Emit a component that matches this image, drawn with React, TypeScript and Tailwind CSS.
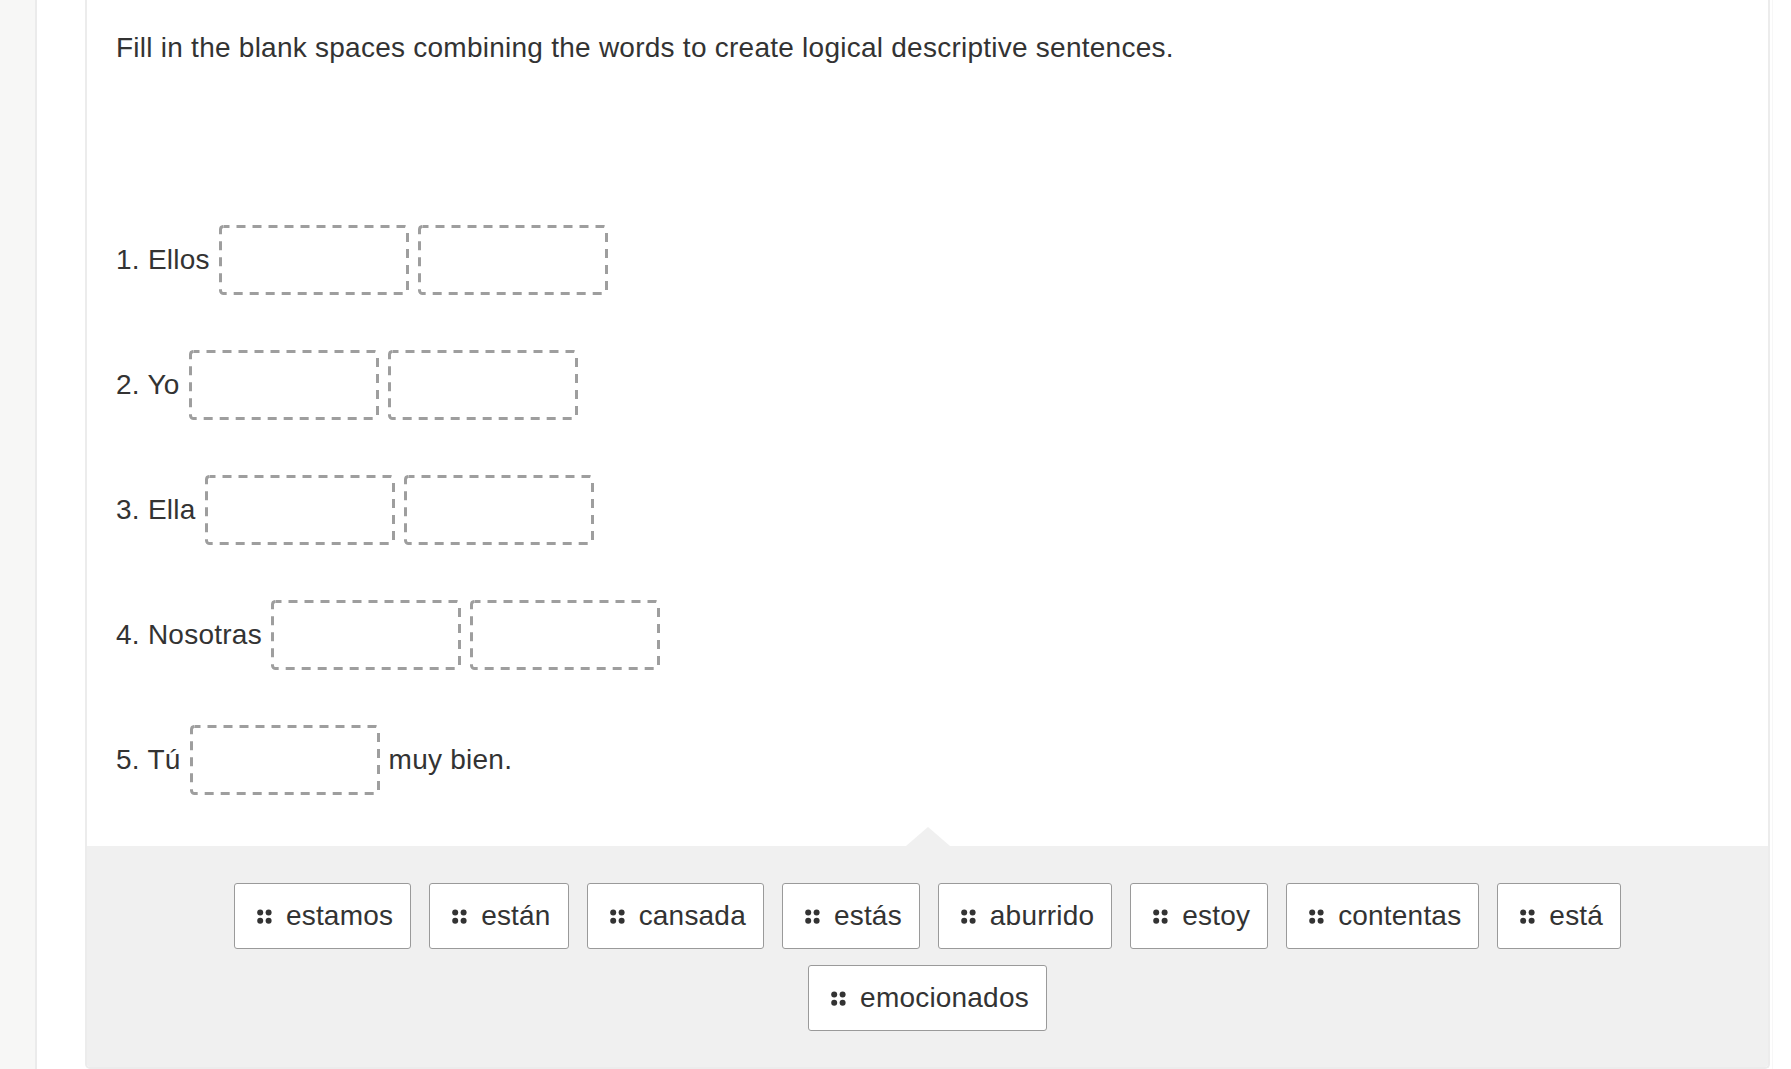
import React from "react";

function Blank() {
  return (
    <div className="relative w-[190px] h-[70px] shrink-0">
      <svg className="absolute inset-0" width="190" height="70" viewBox="0 0 190 70">
        <rect
          x="1.5"
          y="1.5"
          width="187"
          height="67"
          rx="3"
          fill="none"
          stroke="#9e9e9e"
          strokeWidth="3"
          strokeDasharray="9 7"
          strokeDashoffset="3"
        />
      </svg>
    </div>
  );
}

function Dots() {
  return (
    <svg width="15" height="15" viewBox="0 0 15 15" className="shrink-0">
      <circle cx="3.2" cy="3.4" r="3" fill="#333" />
      <circle cx="11.6" cy="3.4" r="3" fill="#333" />
      <circle cx="3.2" cy="11.8" r="3" fill="#333" />
      <circle cx="11.6" cy="11.8" r="3" fill="#333" />
    </svg>
  );
}

function Chip({ word }: { word: string }) {
  return (
    <div className="h-[66px] flex items-center bg-white border border-[#9a9a9a] rounded-[3px] pl-[22px] pr-[17px]">
      <Dots />
      <span className="ml-[14px] text-[28px] leading-[32px] tracking-[0.2px]">{word}</span>
    </div>
  );
}

const rows: { label: string; blanks: number; after?: string }[] = [
  { label: "1. Ellos", blanks: 2 },
  { label: "2. Yo", blanks: 2 },
  { label: "3. Ella", blanks: 2 },
  { label: "4. Nosotras", blanks: 2 },
  { label: "5. Tú", blanks: 1, after: "muy bien." },
];

const words = [
  "estamos",
  "están",
  "cansada",
  "estás",
  "aburrido",
  "estoy",
  "contentas",
  "está",
  "emocionados",
];

export default function App() {
  return (
    <div className="flex h-[1069px] w-[1791px] overflow-hidden bg-white text-[#333] font-['Liberation_Sans',Arial,sans-serif]">
      <div className="w-[37px] shrink-0 bg-[#f7f7f6] border-r-2 border-[#ebebeb]" />
      <div className="w-[48px] shrink-0 bg-white" />
      <div className="w-[1685px] shrink-0 flex flex-col bg-white border-x-2 border-b-2 border-[#ececec] rounded-b-[5px] overflow-hidden">
        <div className="flex-1 pl-[29px] pt-[32px]">
          <p className="text-[28px] leading-[32px] tracking-[0.25px]">
            Fill in the blank spaces combining the words to create logical descriptive sentences.
          </p>
          <div className="mt-[161px] flex flex-col gap-[55px]">
            {rows.map((r) => (
              <div key={r.label} className="flex items-center h-[70px] gap-[9px]">
                <span className="text-[28px] leading-[32px] tracking-[0.25px] whitespace-nowrap">{r.label}</span>
                {Array.from({ length: r.blanks }).map((_, i) => (
                  <Blank key={i} />
                ))}
                {r.after && (
                  <span className="text-[28px] leading-[32px] tracking-[0.25px] whitespace-nowrap">{r.after}</span>
                )}
              </div>
            ))}
          </div>
        </div>
        <div className="relative h-[221px] shrink-0 bg-[#f0f0f0] pt-[37px] px-[100px]">
          <div className="absolute left-1/2 -translate-x-1/2 -top-[19px] w-0 h-0 border-l-[22px] border-r-[22px] border-b-[19px] border-l-transparent border-r-transparent border-b-[#f0f0f0]" />
          <div className="flex flex-wrap justify-center gap-x-[18px] gap-y-[16px]">
            {words.map((w) => (
              <Chip key={w} word={w} />
            ))}
          </div>
        </div>
      </div>
      <div className="flex-1 bg-white border-l border-[#f7f7f7] ml-[2px]" />
    </div>
  );
}
